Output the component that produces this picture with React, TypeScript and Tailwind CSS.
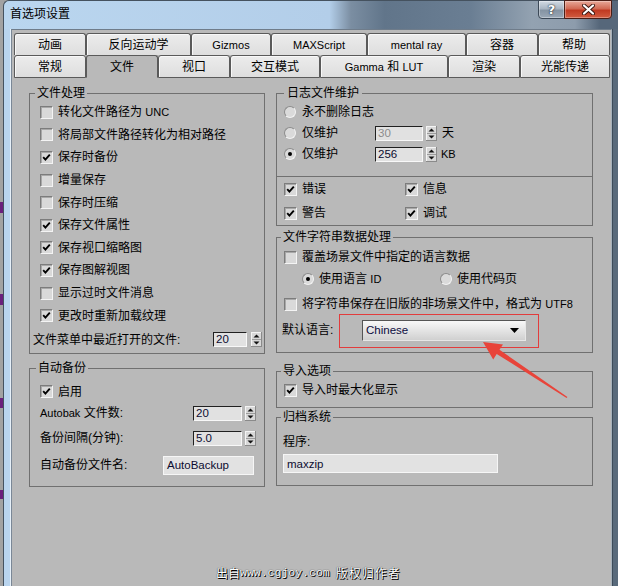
import React from "react";

function L({ children }: { children: React.ReactNode }) {
  return <span className="text-[11px]">{children}</span>;
}

function Check({ checked = false }: { checked?: boolean }) {
  return (
    <span className="flex h-[13px] w-[13px] shrink-0 items-center justify-center border border-t-[#7c7c7c] border-l-[#7c7c7c] border-r-[#f4f4f4] border-b-[#f4f4f4] bg-[#d9d9d9] shadow-[inset_1px_1px_0_#a8a8a8]">
      {checked && (
        <svg width="9" height="9" viewBox="0 0 9 9">
          <path d="M1.2 4.2 L3.4 6.6 L7.8 1.6" fill="none" stroke="#000" strokeWidth="1.9" />
        </svg>
      )}
    </span>
  );
}

function Radio({ on = false }: { on?: boolean }) {
  return (
    <span className="flex h-[12px] w-[12px] shrink-0 items-center justify-center rounded-full border border-t-[#8c8c8c] border-l-[#8c8c8c] border-r-[#f2f2f2] border-b-[#f2f2f2] bg-[#dadada]">
      {on && <span className="h-[4px] w-[4px] rounded-full bg-black" />}
    </span>
  );
}

function Arrows() {
  return (
    <svg width="11" height="15" viewBox="0 0 11 15" className="shrink-0">
      <rect x="0" y="0" width="11" height="15" fill="#8a8a8a" />
      <rect x="0" y="0" width="10" height="14" fill="#f4f4f4" />
      <rect x="1" y="1" width="9" height="13" fill="#d8d8d8" />
      <line x1="1" y1="7.5" x2="10" y2="7.5" stroke="#9c9c9c" />
      <path d="M5.5 2.5 L8.5 5.5 L2.5 5.5 Z" fill="#111" />
      <path d="M2.5 9.5 L8.5 9.5 L5.5 12.5 Z" fill="#111" />
    </svg>
  );
}

function Field({ value, w, muted = false }: { value: string; w: string; muted?: boolean }) {
  return (
    <div
      className={`${w} flex h-[15px] shrink-0 items-center border border-t-[#202020] border-l-[#202020] border-r-[#f8f8f8] border-b-[#f8f8f8] bg-[#e1e1e1] pl-[2px] text-[11.5px] leading-[13px] ${
        muted ? "text-[#8c8c8c]" : "text-[#0c0c30]"
      }`}
    >
      {value}
    </div>
  );
}

function TextBox({ value, w }: { value: string; w: string }) {
  return (
    <div className={`${w} flex h-[19px] shrink-0 items-center border border-[#f6f6f6] bg-[#e2e2e2] pl-[3px] text-[11.5px] leading-[14px] text-[#0c0c30]`}>
      {value}
    </div>
  );
}

function Tab({ label, w, row, active = false }: { label: React.ReactNode; w: string; row: 1 | 2; active?: boolean }) {
  const base = row === 1 ? "h-[22px] border-t border-l border-r" : "h-[23px] border";
  const bg = active
    ? "bg-[#b9b9b9] border-b-[#b9b9b9]"
    : "bg-[linear-gradient(#ececec,#dedede)] shadow-[inset_1px_1px_0_#f8f8f8]";
  return (
    <div className={`${w} ${base} ${bg} flex shrink-0 items-center justify-center rounded-t-[3px] border-[#5a5a5a] text-[12px] leading-[16px]`}>
      {label}
    </div>
  );
}

const leftItems: [React.ReactNode, boolean][] = [
  [<>转化文件路径为 <L>UNC</L></>, false],
  ["将局部文件路径转化为相对路径", false],
  ["保存时备份", true],
  ["增量保存", false],
  ["保存时压缩", false],
  ["保存文件属性", true],
  ["保存视口缩略图", true],
  ["保存图解视图", true],
  ["显示过时文件消息", false],
  ["更改时重新加载纹理", true],
];

export default function App() {
  return (
    <div className="relative flex h-[586px] w-[618px] overflow-hidden bg-[#a2a2a2] text-[12px] leading-[16px] text-black [font-family:'Liberation_Sans','Noto_Sans_CJK_SC',sans-serif]">
      {/* desktop sliver behind the window */}
      <div className="relative w-[3px] shrink-0">
        <span className="absolute left-0 top-[202px] h-[11px] w-[3px] bg-[#6b1f7c]" />
        <span className="absolute left-0 top-[294px] h-[11px] w-[3px] bg-[#6b1f7c]" />
        <span className="absolute left-0 top-[398px] h-[10px] w-[3px] bg-[#6b1f7c]" />
        <span className="absolute left-0 top-[490px] h-[9px] w-[3px] bg-[#6b1f7c]" />
      </div>

      {/* window */}
      <div className="flex h-[610px] w-[615px] shrink-0 flex-col rounded-tl-[6px] border-l border-t border-[#45525f] bg-[linear-gradient(90deg,#bad6ef_0%,#b3cee9_53%,#7b8ea2_56.5%,#61758a_62%,#6a7e93_76%,#93a2b1_86%,#8d9cac_93%,#56677a_97%)]">
        {/* title bar */}
        <div className="flex h-[28px] shrink-0 items-start pr-[6px]">
          <span className="mt-[5px] pl-[6px] text-[12px] leading-[16px] text-black">首选项设置</span>
          <div className="-mt-px ml-auto flex">
            <div className="flex h-[19px] w-[27px] items-center justify-center rounded-bl-[4px] border border-[#3c4957] bg-[linear-gradient(#d2dbe4,#a9b6c3_45%,#8594a3_55%,#9aa8b6)] shadow-[inset_0_0_0_1px_rgba(255,255,255,0.35)]">
              <span className="text-[13px] font-bold leading-[14px] text-white [font-family:'DejaVu_Sans',sans-serif] [text-shadow:0_0_2px_#1c2630,0_0_1px_#1c2630]">?</span>
            </div>
            <div className="-ml-px flex h-[19px] w-[48px] items-center justify-center rounded-br-[4px] border border-[#4a1e16] bg-[linear-gradient(#e8a999,#d16a54_45%,#c03a22_55%,#d25c40)] shadow-[inset_0_0_0_1px_rgba(255,255,255,0.3)]">
              <svg width="13" height="11" viewBox="0 0 13 11">
                <path d="M2 1.5 L11 9.5 M11 1.5 L2 9.5" stroke="#3a1610" strokeWidth="4" strokeLinecap="round" />
                <path d="M2 1.5 L11 9.5 M11 1.5 L2 9.5" stroke="#ffffff" strokeWidth="2.2" strokeLinecap="round" />
              </svg>
            </div>
          </div>
        </div>

        {/* window body */}
        <div className="flex flex-1">
          <div className="w-[7px] shrink-0 border-r border-[#e6f0f8] bg-[#b9d4ee]" />
          <div className="flex w-[601px] shrink-0 flex-col border-l border-r border-t border-l-[#7a8796] border-r-[#a5b0ba] border-t-[#6f7c8a] bg-[#b9b9b9]">
            {/* tabs */}
            <div className="flex flex-col pl-[2px] pt-[3px]">
              <div className="flex">
                <Tab row={1} w="w-[72px]" label="动画" />
                <Tab row={1} w="w-[105px]" label="反向运动学" />
                <Tab row={1} w="w-[80px]" label={<L>Gizmos</L>} />
                <Tab row={1} w="w-[96px]" label={<L>MAXScript</L>} />
                <Tab row={1} w="w-[99px]" label={<L>mental ray</L>} />
                <Tab row={1} w="w-[72px]" label="容器" />
                <Tab row={1} w="w-[72px]" label="帮助" />
              </div>
              <div className="flex">
                <Tab row={2} w="w-[72px]" label="常规" />
                <Tab row={2} w="w-[72px]" label="文件" active />
                <Tab row={2} w="w-[72px]" label="视口" />
                <Tab row={2} w="w-[90px]" label="交互模式" />
                <Tab row={2} w="w-[128px]" label={<><L>Gamma</L>&nbsp;和&nbsp;<L>LUT</L></>} />
                <Tab row={2} w="w-[72px]" label="渲染" />
                <Tab row={2} w="w-[90px]" label="光能传递" />
              </div>
            </div>

            {/* panel */}
            <div className="flex gap-[11px] pl-[17px] pt-[7px]">
              {/* left column */}
              <div className="flex flex-col">
                <fieldset className="h-[269px] w-[236px] border border-[#707070]">
                  <legend className="ml-[5px] px-[2px] leading-[16px]">文件处理</legend>
                  <div className="flex flex-col">
                    {leftItems.map(([label, checked], i) => (
                      <div key={i} className="flex h-[22.6px] items-center gap-[5px] pl-[10px]">
                        <Check checked={checked} />
                        <span>{label}</span>
                      </div>
                    ))}
                    <div className="flex h-[26px] items-center justify-between pl-[3px] pr-[2px]">
                      <span>文件菜单中最近打开的文件:</span>
                      <div className="flex items-center gap-[4px]">
                        <Field value="20" w="w-[34px]" />
                        <Arrows />
                      </div>
                    </div>
                  </div>
                </fieldset>

                <fieldset className="mt-[6px] h-[127px] w-[236px] border border-[#707070]">
                  <legend className="ml-[6px] px-[2px] leading-[16px]">自动备份</legend>
                  <div className="flex flex-col">
                    <div className="mt-[4px] flex h-[23px] items-center gap-[5px] pl-[10px]">
                      <Check checked />
                      <span>启用</span>
                    </div>
                    <div className="flex h-[20px] items-center justify-between pl-[10px] pr-[8px]">
                      <span><L>Autobak</L> 文件数:</span>
                      <div className="flex items-center gap-[3px]">
                        <Field value="20" w="w-[49px]" />
                        <Arrows />
                      </div>
                    </div>
                    <div className="mt-[5px] flex h-[20px] items-center justify-between pl-[10px] pr-[8px]">
                      <span>备份间隔(分钟):</span>
                      <div className="flex items-center gap-[3px]">
                        <Field value="5.0" w="w-[49px]" />
                        <Arrows />
                      </div>
                    </div>
                    <div className="mt-[7px] flex h-[20px] items-center justify-between pl-[10px] pr-[10px]">
                      <span>自动备份文件名:</span>
                      <TextBox value="AutoBackup" w="w-[91px]" />
                    </div>
                  </div>
                </fieldset>
              </div>

              {/* right column */}
              <div className="flex flex-col">
                <fieldset className="h-[141px] w-[317px] border border-[#707070]">
                  <legend className="ml-[7px] px-[3px] leading-[16px]">日志文件维护</legend>
                  <div className="flex flex-col">
                    <div className="flex h-[22px] items-center gap-[6px] pl-[7px]">
                      <Radio />
                      <span>永不删除日志</span>
                    </div>
                    <div className="flex h-[20px] items-center pl-[7px]">
                      <Radio />
                      <span className="ml-[6px] w-[73px]">仅维护</span>
                      <Field value="30" w="w-[48px]" muted />
                      <span className="ml-[3px]"><Arrows /></span>
                      <span className="ml-[5px]">天</span>
                    </div>
                    <div className="flex h-[22px] items-center pl-[7px]">
                      <Radio on />
                      <span className="ml-[6px] w-[73px]">仅维护</span>
                      <Field value="256" w="w-[48px]" />
                      <span className="ml-[3px]"><Arrows /></span>
                      <span className="ml-[4px] text-[11px]">KB</span>
                    </div>
                    <div className="mt-[11px] border-t border-[#707070]" />
                    <div className="flex h-[24px] items-center pl-[7px]">
                      <div className="flex w-[121px] items-center gap-[5px]">
                        <Check checked />
                        <span>错误</span>
                      </div>
                      <div className="flex items-center gap-[5px]">
                        <Check checked />
                        <span>信息</span>
                      </div>
                    </div>
                    <div className="flex h-[24px] items-center pl-[7px]">
                      <div className="flex w-[121px] items-center gap-[5px]">
                        <Check checked />
                        <span>警告</span>
                      </div>
                      <div className="flex items-center gap-[5px]">
                        <Check checked />
                        <span>调试</span>
                      </div>
                    </div>
                  </div>
                </fieldset>

                <fieldset className="mt-[3px] h-[124px] w-[317px] border border-[#707070]">
                  <legend className="ml-[4px] px-[2px] leading-[16px]">文件字符串数据处理</legend>
                  <div className="flex flex-col">
                    <div className="mt-[1px] flex h-[22px] items-center gap-[5px] pl-[7px]">
                      <Check />
                      <span>覆盖场景文件中指定的语言数据</span>
                    </div>
                    <div className="flex h-[21px] items-center pl-[25px]">
                      <div className="flex w-[138px] items-center gap-[5px]">
                        <Radio on />
                        <span>使用语言 <L>ID</L></span>
                      </div>
                      <div className="flex items-center gap-[5px]">
                        <Radio />
                        <span>使用代码页</span>
                      </div>
                    </div>
                    <div className="mt-[4px] flex h-[22px] items-center gap-[5px] pl-[7px]">
                      <Check />
                      <span className="whitespace-nowrap">将字符串保存在旧版的非场景文件中，格式为 <L>UTF8</L></span>
                    </div>
                    <div className="relative mt-[4px] flex h-[22px] items-center">
                      <span className="w-[85px] shrink-0 pl-[5px]">默认语言:</span>
                      <div className="flex h-[21px] w-[164px] items-center justify-between border border-t-[#555555] border-l-[#555555] border-r-[#e6e6e6] border-b-[#e6e6e6] bg-[linear-gradient(#f8f8f8,#e6e6e6_45%,#d0d0d0)] pl-[3px] pr-[6px] text-[11.5px] text-[#0c0c40]">
                        <span>Chinese</span>
                        <svg width="9" height="5" viewBox="0 0 9 5">
                          <path d="M0 0 L9 0 L4.5 5 Z" fill="#000" />
                        </svg>
                      </div>
                      <div className="pointer-events-none absolute left-[62px] top-[-5px] h-[34px] w-[200px] border border-[#e23c3c]" />
                    </div>
                  </div>
                </fieldset>

                <fieldset className="mt-[10px] h-[45px] w-[317px] border border-[#707070]">
                  <legend className="ml-[4px] px-[2px] leading-[16px]">导入选项</legend>
                  <div className="flex h-[22px] items-center gap-[5px] pl-[7px]">
                    <Check checked />
                    <span>导入时最大化显示</span>
                  </div>
                </fieldset>

                <fieldset className="mt-[1px] h-[77px] w-[317px] border border-[#707070]">
                  <legend className="ml-[4px] px-[2px] leading-[16px]">归档系统</legend>
                  <div className="flex flex-col">
                    <div className="mt-[7px] flex h-[20px] items-center pl-[6px]">程序:</div>
                    <div className="ml-[6px] mt-[2px]">
                      <TextBox value="maxzip" w="w-[215px]" />
                    </div>
                  </div>
                </fieldset>
              </div>
            </div>
          </div>
          <div className="w-[6px] shrink-0 border-l border-[#3e4c5a] bg-[#596a7b]" />
        </div>
      </div>

      {/* red annotation arrow */}
      <svg className="pointer-events-none absolute left-[478px] top-[336px]" width="95" height="66" viewBox="0 0 95 66">
        <path d="M5 6 L25 8.4 L21.5 13.8 L89.4 61 L88.6 62 L18.7 18 L15.2 23.4 Z" fill="#e8443a" />
      </svg>

      {/* watermark */}
      <div className="pointer-events-none absolute left-[216px] top-[565px] flex items-center whitespace-nowrap text-white [text-shadow:1px_1px_0_#000,0_0_1px_#000]">
        <span className="text-[12px] leading-[16px] [font-family:'Noto_Sans_CJK_SC',sans-serif]">出自</span>
        <span className="text-[11.5px] leading-[16px] [font-family:'Liberation_Mono',monospace]">www.cgjoy.com</span>
        <span className="ml-[6px] text-[12px] leading-[16px] tracking-[1px] [font-family:'Noto_Sans_CJK_SC',sans-serif]">版权归作者</span>
      </div>
    </div>
  );
}
